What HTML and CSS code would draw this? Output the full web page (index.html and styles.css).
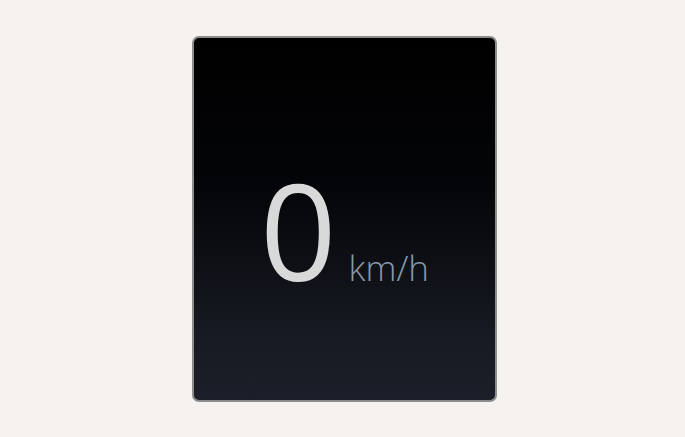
FILE: index.html
```html
<!DOCTYPE html>
<html>
<head>
<meta charset="utf-8">
<link rel="stylesheet" href="styles.css">
</head>
<body>
<div class="page">
  <div class="card">
    <div class="speed">
      <span class="value">0</span><span class="unit">km/h</span>
    </div>
  </div>
</div>
</body>
</html>
```
FILE: styles.css
```css
html, body {
  margin: 0;
  padding: 0;
  background: #f5f2f0;
}
.page {
  width: 685px;
  height: 437px;
  display: flex;
  justify-content: center;
  align-items: flex-start;
  padding: 36px 0 0 3px;
  box-sizing: border-box;
}
.card {
  width: 305px;
  height: 366px;
  box-sizing: border-box;
  border: 2px solid #8c8c8c;
  border-radius: 7px;
  background: linear-gradient(180deg, #000000 0%, #040508 40%, #0f1117 65%, #181b24 85%, #1c1f29 100%);
  display: flex;
  justify-content: center;
  align-items: flex-start;
  padding-top: 124px;
}
.speed {
  display: flex;
  align-items: baseline;
  font-family: "Open Sans", sans-serif;
  margin-left: 1px;
}
.value {
  font-size: 134px;
  font-weight: 400;
  line-height: 1;
  color: #d9d9d9;
}
.unit {
  font-size: 35px;
  font-weight: 300;
  line-height: 1;
  color: #8797aa;
  margin-left: 12px;
}
```
